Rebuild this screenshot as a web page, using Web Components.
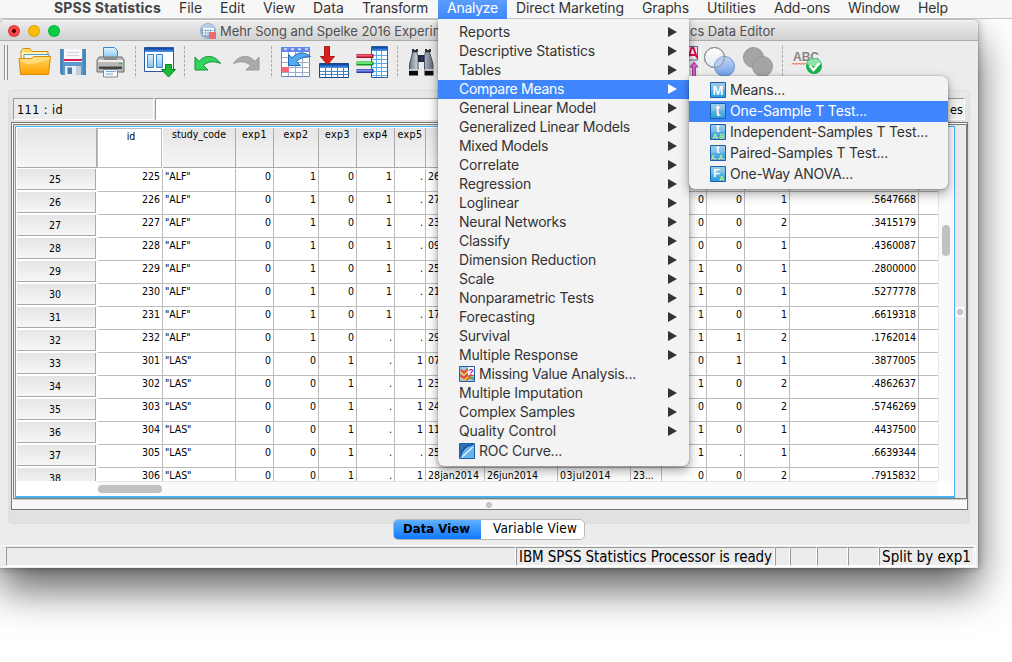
<!DOCTYPE html>
<html lang="en"><head><meta charset="utf-8"><title>SPSS Statistics</title>
<style>
html,body{margin:0;width:1012px;height:662px;overflow:hidden;background:#fff}
body{font-family:Inter,"Open Sans",sans-serif;color:#333}
</style></head><body>
<stats-desktop></stats-desktop>
<script>
const LUCIDA='"DejaVu Sans Condensed","DejaVu Sans",sans-serif';
const define=(name,build,hook)=>customElements.define(name,class extends HTMLElement{
  connectedCallback(){
    if(this.shadowRoot)return;
    this.attachShadow({mode:'open'}).innerHTML=build(this);
    if(hook)hook(this);
  }
});

/* A single line of text whose tracking is adjusted so that it spans w pixels. */
define('fit-text',()=>`<style>:host{display:inline-block;white-space:pre;flex:none}span{display:inline-block}</style><span><slot></slot></span>`,el=>{
  const w=+el.getAttribute('w');if(!w)return;
  const s=el.shadowRoot.querySelector('span'),n=el.textContent.length;
  s.style.letterSpacing='0px';
  s.style.letterSpacing=((w-s.getBoundingClientRect().width)/n)+'px';
});

define('menu-bar',()=>{
  const items=[['SPSS Statistics',54,107],['File',179,23],['Edit',220,25],['View',263,32],['Data',313,31],['Transform',362,66],['Analyze',447,51],['Direct Marketing',516,108],['Graphs',642,47],['Utilities',707,49],['Add-ons',774,56],['Window',848,52],['Help',918,30]];
  let end=0;
  const html=items.map(([t,x,w],i)=>{
    const on=t==='Analyze',a=on?438:x,b=on?507:x+w;
    const h=`<div class="i ${on?'on':''} ${i?'':'b'}" style="margin-left:${a-end}px;width:${b-a}px"><fit-text w="${w}">${t}</fit-text></div>`;
    end=b;return h;
  }).join('');
  return `<style>:host{display:flex;height:19px;background:#f7f7f7;border-bottom:1px solid #c4c4c4;box-sizing:border-box;font-size:14px;line-height:15px;color:#333;position:relative;z-index:3}
  .i{flex:none;height:19px;box-sizing:border-box}.b{font-weight:700;color:#444}.on{background:linear-gradient(#5b9dfb,#3f87fb);color:#fff;padding-left:9px}</style>${html}`;
});

define('title-bar',()=>`<style>
:host{display:flex;height:21px;box-sizing:border-box;border-bottom:1px solid #acacac;border-top:1px solid #f6f6f6;background:linear-gradient(#ececec,#d1d1d1);border-radius:5px 5px 0 0;font-size:13px;line-height:20px;color:#505050;overflow:hidden}
.d{width:12px;height:12px;box-sizing:border-box;border-radius:50%;margin:4px 0 0 8px;flex:none;border:1px solid #0002}
svg{margin:2px 3px 0 140px;flex:none}.clip{width:218px;overflow:hidden;flex:none}.r{margin-left:252px}</style>
<div class="d" style="background:radial-gradient(circle,#500 0 1.7px,#fc4648 2.3px)"></div><div class="d" style="background:#fdbc05"></div><div class="d" style="background:#08cf42"></div>
<svg width="17" height="17" viewBox="0 0 17 17"><circle cx="8" cy="8" r="8" fill="#8faed0"/><path d="M1 5a8 8 0 0 1 14 0z" fill="#b7cbe1"/><path d="M3 5h11v7H3z" fill="#fff"/><path d="M3 7.5h11M3 10h11M5.5 6v6M8 6v6M10.500 6v6" stroke="#86a7d0" stroke-width=".8"/><path d="M9 9h7v7H9z" fill="#ef6a6e"/></svg>
<div class="clip"><fit-text w="224">Mehr Song and Spelke 2016 Experim</fit-text></div><fit-text class="r" w="85">cs Data Editor</fit-text>`);

define('tool-bar',()=>{
  const sep=x=>[x,1,`<path d="M${x+.5} 46v32" stroke="#aaa" stroke-dasharray="3 1.500"/>`];
  const items=[
  [3,6,`<path d="M4.500 45v35M7.500 45v35" stroke="#8d8d8d"/><path d="M5.500 45v35" stroke="#fff"/>`],
  [18,34,`<path d="M21 74V51l2-2.500h7l2 3h16v18z" fill="#fff3b5" stroke="#d98709"/><path d="M22 52l2-2.500h6l2 3" fill="#ffd34a"/><path d="M24 54.500h25v14H24z" fill="#f2fbff" stroke="#4c9fd6"/><path d="M20.500 74.500L19 58.500h12l3-2h16.500L48.500 74.500z" fill="url(#fo)" stroke="#e08a07"/><path d="M20 60c9 9 20 1 30-1v-2H34l-3 2H20z" fill="#ffe48a" opacity=".7"/>`],
  [60,27,`<path d="M60 49h26v26H62l-2-2z" fill="#5b9acb"/><path d="M60 49h3v26h-1l-2-2zM83 49h3v26h-3z" fill="#4a88ba"/><path d="M64 49h18v13H64z" fill="#f7f7fa"/><path d="M64 60h18" stroke="#d91f55" stroke-width="2"/><path d="M67 52.500h12M67 55.500h12" stroke="#d5d5de"/><path d="M65 66h16v9H65z" fill="#e9eef3"/><path d="M67.500 67.500h4.500V74h-4.500z" fill="#407fb0"/><path d="M76 66h5v9h-5z" fill="#c2ccd5"/>`],
  [96,29,`<path d="M103.500 47.500h11l3 3V59h-14z" fill="url(#bl)" stroke="#3e87c8"/><path d="M99 57h23l2 3v12h-27V60z" fill="#b9b9b9" stroke="#6d6d6d"/><path d="M98 60h25v2H98z" fill="#eee"/><path d="M104 57h13v3h-13z" fill="#8b8b8b"/><path d="M99 66.500h23v2.500H99z" fill="#444"/><path d="M119 63.500h3" stroke="#26c441" stroke-width="1.500"/><path d="M103.500 69.500h14v7.500h-14z" fill="#f5f8fb" stroke="#888"/><path d="M106 71.500h10M106 74h7" stroke="#7ea6d8"/>`],
  sep(135),
  [143,33,`<path d="M144.500 47.500h29v24h-29z" fill="#fff" stroke="#2a579e"/><path d="M145 48h28v4h-28z" fill="url(#hd)"/><path d="M147.500 54.500h6v13h-6zM156.500 54.500h6v13h-6z" fill="url(#bl)" stroke="#3e82c4"/><path d="M165.500 64.500h6v5h4l-7 7.500-7-7.500h4z" fill="#16bd34" stroke="#08831c"/>`],
  sep(184),
  [194,28,`<path d="M195 57v13h13l-4.500-4.500c4-4 10-5 17-2-5-8-15-10-21.500-2z" fill="#32d45a" stroke="#15923a"/>`],
  [232,28,`<path d="M259 57v13h-13l4.500-4.500c-4-4-10-5-17-2 5-8 15-10 21.500-2z" fill="#aaa" stroke="#999"/>`],
  sep(271),
  [280,32,`<path d="M281.500 47.500h28v29h-28z" fill="#fff" stroke="#6a86c2"/><path d="M281 47h29v5h-29z" fill="#6387ef"/><path d="M283.500 48.500h4l-2 2zM290.500 48.500h4l-2 2zM297.500 48.500h4l-2 2zM304.500 48.500h4l-2 2z" fill="#fff"/><path d="M288.500 52v24M295.500 52v24M302.500 52v24M282 57.500h28M282 62.500h28M282 67.500h28M282 72.500h28" stroke="#9badc7"/><path d="M282 67h7v5h-7z" fill="#fa6476"/><path d="M288.500 54.500v11h12l-4-4c4-4 9-5 14-5-6-5-14-5-18 1.500z" fill="#54aaf2" stroke="#1e66b4"/>`],
  [319,32,`<path d="M319.500 63.500h29v14h-29z" fill="#fff" stroke="#164887"/><path d="M320 64h28v4h-28z" fill="url(#hd)"/><path d="M325.500 68v9M331.500 68v9M337.500 68v9M343.500 68v9M320 71.500h29M320 74.500h29" stroke="#3c83bf"/><path d="M324.500 46.500h5v10h5l-7 8-7-8h4z" fill="#e01c1c" stroke="#921"/>`],
  [355,34,`<path d="M371.500 46.500h16v31h-16z" fill="#fff" stroke="#285e9c"/><path d="M372 47h15v4h-15z" fill="url(#hd)"/><path d="M376.500 51v26M381.500 51v26M372 55.500h15M372 59.500h15M372 63.500h15M372 67.500h15M372 71.500h15M372 75.500h15" stroke="#55aeea"/><path d="M356.500 56h17" stroke="#a91228" stroke-width="4"/><path d="M357 55.500h15" stroke="#ff5a74" stroke-width="2"/><path d="M356.500 63.500h17" stroke="#159724" stroke-width="4"/><path d="M357 63h15" stroke="#5fe86c" stroke-width="2"/><path d="M356.500 71h17" stroke="#2a3aa9" stroke-width="4"/><path d="M357 70.500h15" stroke="#7b8df5" stroke-width="2"/>`],
  sep(397),
  [408,27,`<path d="M412.500 52h4l1.500 4v14h-8.500v-6l2-7zM425.500 52h4l1.500 5 2 7v6h-8.500V56z" fill="url(#bi)" stroke="#4a5460"/><path d="M412 49h6v3h-6zM425 49h6v3h-6z" fill="#2d323b"/><path d="M414 49.500h2M427 49.500h2" stroke="#dde"/><path d="M418 55h6v7h-6z" fill="#272b33"/><path d="M409 70h9v5.500h-9zM424.500 70h9v5.500h-9z" fill="#0b0b0d"/><path d="M409 70h9M424.500 70h9" stroke="#e8edf3" stroke-width="1.500"/><path d="M421 57h2v3h-2z" fill="#3a2eb0"/>`],
  [682,19,`<path d="M683 46.500h14.500V60H683z" fill="#fdeef4" stroke="#4a69a2"/><path d="M688 58l3.500-10h2L697 58M689 55h7" stroke="#e00b50" stroke-width="2" fill="none"/><path d="M694 62l-4 5h2.500v10h3V67h2.500z" fill="#d767cb" stroke="#a23c9a"/><path d="M700.500 45v32" stroke="#fff"/>`],
  [703,34,`<circle cx="714.500" cy="57.500" r="10" fill="url(#vw)" stroke="#8f8f8f"/><circle cx="724.500" cy="66.500" r="10" fill="url(#vb)" stroke="#6c8fcc"/><path d="M715 65a10 10 0 0 1 9.500-8.500 10 10 0 0 1-8.500 11z" fill="#b7cbee"/><circle cx="714.500" cy="57.500" r="10" fill="none" stroke="#8f8f8f"/>`],
  [742,33,`<circle cx="753.500" cy="57.500" r="10" fill="#a5a5a5" stroke="#959595"/><circle cx="762.500" cy="66.500" r="10" fill="#a5a5a5" stroke="#959595"/>`],
  sep(782),
  [791,33,`<text x="793" y="61" font-family="Liberation Sans" font-size="12" font-weight="700" fill="#858585" textLength="26" lengthAdjust="spacingAndGlyphs">ABC</text><path d="M792 64.500l1.500-1.500 1.500 1.500 1.500-1.500 1.500 1.500 1.500-1.500 1.500 1.500 1.500-1.500 1.500 1.500 1.500-1.500" stroke="#f0501e" fill="none"/><circle cx="814" cy="66" r="8" fill="#18b14c"/><path d="M807 64a7.200 7.200 0 0 1 14 0c-4 3-9 3-14 0z" fill="#8ee2a6"/><path d="M809.500 65.500l4 4.500 6-7" stroke="#fff" stroke-width="2.500" fill="none"/>`]];
  let end=0;
  const html=items.map(([x,w,s])=>{const m=x-end;end=x+w;return `<svg style="margin-left:${m}px" width="${w}" height="36" viewBox="${x} 44 ${w} 36">${s.includes('url(')?defs:''}${s}</svg>`}).join('');
  return `<style>:host{display:flex;height:49px;padding-top:3px;box-sizing:border-box}svg{flex:none}</style>${html}`;
});
const g=(id,a,b)=>`<linearGradient id="${id}" x2="0" y2="1"><stop stop-color="${a}"/><stop offset="1" stop-color="${b}"/></linearGradient>`;
const defs=`<defs>${g('fo','#ffd765','#ffa000')}${g('bl','#def4ff','#7cc5f5')}${g('hd','#083f9e','#4f9dec')}${g('vw','#ffffff','#e2e7f0')}${g('vb','#c6d8f7','#6f9ce4')}<linearGradient id="bi"><stop stop-color="#6b7a89"/><stop offset=".4" stop-color="#dde6ee"/><stop offset="1" stop-color="#5e6b78"/></linearGradient></defs>`;

const EDGES=[97,162,235,273,318,356,394,425,484,557,630,661,706,744,789,918,938];
const COLS=EDGES.slice(1).map((e,i)=>(e-EDGES[i])+'px').join(' ');
const L='0 1 0 1 .',S='0 0 1 . 1';
const ROWS=[
[25,225,'ALF',L,'26',''],[26,226,'ALF',L,'27','0 0 1 .5647668'],[27,227,'ALF',L,'23','0 0 2 .3415179'],[28,228,'ALF',L,'09','0 0 1 .4360087'],
[29,229,'ALF',L,'25','1 0 1 .2800000'],[30,230,'ALF',L,'21','1 0 1 .5277778'],[31,231,'ALF',L,'17','1 0 1 .6619318'],[32,232,'ALF','0 1 0 . .','29','1 1 2 .1762014'],
[33,301,'LAS',S,'07','0 1 1 .3877005'],[34,302,'LAS',S,'23','1 0 2 .4862637'],[35,303,'LAS',S,'24','0 0 2 .5746269'],[36,304,'LAS',S,'11','1 0 1 .4437500'],
[37,305,'LAS','0 0 1 . .','25','1 . 1 .6639344'],[38,306,'LAS',S,'28jan2014|26jun2014|03jul2014|23...','0 0 2 .7915832']];

define('data-row',el=>{
  const [n,id,code,a,dates,b]=ROWS[el.getAttribute('index')];
  const d=dates.split('|'),r=b?b.split(' '):['','','',''];
  const cell=(t,l)=>`<div class="c ${l?'l':''}">${t}</div>`;
  return `<style>:host{display:grid;grid-template-columns:81px ${COLS};height:23px;box-sizing:border-box}
  .h{height:21px;box-sizing:border-box;width:79px;border-right:1px solid #aaa;border-bottom:1px solid #aaa;background:linear-gradient(#e5e5e5,#f6f6f6);text-align:center;line-height:21px;padding-right:2px}
  .c{border-right:1px solid #bcbcbc;border-bottom:1px solid #bcbcbc;box-sizing:border-box;height:23px;line-height:15px;text-align:right;padding-right:2px;white-space:nowrap;overflow:hidden}
  .c.l{text-align:left;padding:0 0 0 2px}.c:last-child{border-right:0}</style>
  <div class="h">${n}</div>${cell(id)}${cell('"'+code+'"',1)}${a.split(' ').map(t=>cell(t)).join('')}${[0,1,2,3].map(i=>cell(/^\d.*\d{4}$/.test(d[i]||'')?`<fit-text w="51">${d[i]}</fit-text>`:d[i]||'',1)).join('')}${r.map(t=>cell(t)).join('')}<div class="c"></div>`;
});

define('data-grid',()=>{
  const names=['id','study_code','exp1','exp2','exp3','exp4','exp5'],widths=[0,54,25,25,25,25,25];
  return `<style>:host{display:block;height:372px;box-sizing:border-box;border:1px solid #47b2ee;border-width:1px 1px 2px 1px;background:#fff;font:10.5px/17px ${LUCIDA};font-stretch:condensed;letter-spacing:-.05px;color:#000;width:940px;padding-left:1px}
  .main{display:flex;height:354px}.table{width:921px;height:354px;overflow:hidden;flex:none}
  .head{display:grid;grid-template-columns:81px ${COLS};height:41px;margin-top:1px}
  .head div{background:linear-gradient(#e5e5e5,#f6f6f6);border-right:1px solid #aaa;border-bottom:1px solid #aaa;height:40px;box-sizing:border-box;text-align:center;line-height:13px}
  .head .k{margin-right:1px}.head div.id{background:#fff;border:1px solid #bbb;margin:0 1px 0 -1px;line-height:15px;padding-left:3px}
  .v{width:16px;background:#fafafa;border-left:1px solid #e6e6e6;box-sizing:border-box;padding:98px 0 0 3px}.v i{display:block;width:8px;height:31px;border-radius:4px;background:#c1c1c1}
  .s{height:15px;display:flex;border-top:1px solid #e4e4e4;margin-left:80px;width:841px;background:#fafafa;box-sizing:border-box;padding:3px 1px}.s i{width:64px;height:8px;border-radius:4px;background:#c1c1c1}</style>
  <div class="main"><div class="table"><div class="head"><div class="k"></div>${EDGES.slice(1).map((e,i)=>`<div class="${i?'':'id'}">${names[i]?`<fit-text w="${widths[i]}">${names[i]}</fit-text>`:''}</div>`).join('')}</div>
  ${ROWS.map((r,i)=>`<data-row index="${i}"></data-row>`).join('')}</div><div class="v"><i></i></div></div><div class="s"><i></i></div>`;
});

define('data-panel',()=>`<style>
:host{display:block;margin-left:8px;width:962px;height:434px;box-sizing:border-box;background:linear-gradient(#e8e8e8,#e1e1e1 30px);border:1px solid #dedede;border-radius:4px;padding:7px 0 0 2px}
.fields{display:flex;margin-left:2px;width:952px;height:24px;font:12.5px/22px ${LUCIDA};font-stretch:condensed;color:#000}
.f{box-sizing:border-box;height:22px;border:1px solid #fff;border-top-color:#999;border-left-color:#999;background:#ececec}
.a{width:141px;padding-left:3px;flex:none}.b{flex:1;background:#fff;margin-left:1px}.c{flex:none;width:109px;margin-left:1px;text-align:right;padding-right:1px;background:#f1f1f1}
.outer{width:957px;height:388px;box-sizing:border-box;border:1px solid #777;background:linear-gradient(#fff,#f8f8f8);padding:1px}
.inner{width:954px;height:375px;box-sizing:border-box;border:1px solid #7c7c7c;display:flex;padding:1px;background:#ebebeb}
.split{flex:1;display:flex;align-items:center}.vd{width:9px;height:10px;background:#fafafa;display:grid;place-items:center}.dot{width:6px;height:6px;border-radius:50%;background:#ccc;box-sizing:border-box;border:1px solid #b8b8b8}
.hd{height:10px;display:flex;justify-content:center;align-items:center;border-top:1px solid #ccc;padding-right:1px;box-sizing:border-box}</style>
<div class="fields"><div class="f a"><fit-text w="46">111 : id</fit-text></div><div class="f b"></div><div class="f c"><fit-text w="13">es</fit-text></div></div>
<div class="outer"><div class="inner"><data-grid></data-grid><div class="split"><div class="vd"><div class="dot"></div></div></div></div><div class="hd"><div class="dot"></div></div></div>`);

define('view-tabs',()=>`<style>:host{display:flex;margin:-5px 0 0 393px;height:21px;width:192px;box-sizing:border-box;border:1px solid #b9b9b9;border-radius:5px;background:#fff;overflow:hidden;font:13.5px/17px ${LUCIDA};font-stretch:condensed;color:#000;position:relative}
.on{margin:-1px 0 -1px -1px;width:88px;height:21px;line-height:19px;font-size:13px;font-weight:700;background:linear-gradient(#63b2fd,#0a76fe);box-sizing:border-box;padding-left:10px}.off{padding-left:12px}</style>
<div class="on"><fit-text w="67">Data View</fit-text></div><div class="off"><fit-text w="84">Variable View</fit-text></div>`);

define('status-bar',()=>`<style>:host{display:flex;margin:5px 2px 0 1px;height:22px;border-top:1px solid #fff;border-bottom:1px solid #fff;border-right:1px solid #fff;box-sizing:border-box;padding:1px 1px 0 5px;font:15px/20px ${LUCIDA};font-stretch:condensed;color:#000}
div{box-sizing:border-box;height:19px;border:1px solid #fff;border-top-color:#999;border-left-color:#999;padding-left:2px;overflow:hidden;line-height:18px;flex:none}</style>
<div style="width:510px"></div><div style="width:259px"><fit-text w="253">IBM SPSS Statistics Processor is ready</fit-text></div><div style="width:15px"></div><div style="width:27px"></div><div style="width:31px"></div><div style="width:31px"></div><div style="width:95px"><fit-text w="89">Split by exp1</fit-text></div>`);

define('menu-icon',el=>{
  const t={
  M:`<text x="8" y="13" text-anchor="middle" font-size="13" font-weight="700" fill="#fff">M</text>`,
  t:`<text x="8" y="13" text-anchor="middle" font-size="16" font-weight="700" fill="#fff" stroke="#367" stroke-width=".2">t</text>`,
  ab:`<text x="8" y="8" text-anchor="middle" font-size="10" font-weight="700" fill="#fff">t</text><text x="2.500" y="15" font-size="7.500" fill="#ffff62" textLength="12" lengthAdjust="spacingAndGlyphs">A-B</text>`,
  pair:`<text x="8" y="8" text-anchor="middle" font-size="10" font-weight="700" fill="#fff">t</text><text x="1" y="14.500" font-size="7.500" fill="#ffff62" textLength="14" lengthAdjust="spacingAndGlyphs">A₁-A₂</text>`,
  F:`<text x="6.500" y="10.500" text-anchor="middle" font-size="11" font-weight="700" fill="#fff">F</text><text x="11.500" y="15" text-anchor="middle" font-size="7" fill="#ffff62">A</text>`,
  roc:`<path d="M1 15C2 8 7 2 15 1v14z" fill="#66b4e8"/><path d="M1 1h13C6 2 2 7 1 14z" fill="#2f6fb8"/><path d="M1.500 14C2.500 7 7 2.500 14 1.500" fill="none" stroke="#134a98" stroke-width="1.300"/><path d="M3 14L14 4" fill="none" stroke="#eefaff" stroke-width="1.200"/>`,
  miss:`<path d="M1 1h14v14H1z" fill="#a5c6df"/><path d="M2 4l3 3 4-4M1 9l4 3 4-4M7 14l3-3 5 2M10 9h5" stroke="#e84520" stroke-width="2" fill="none"/><path d="M2 6l3 3 4-4M2 13l4 1 3-3" stroke="#f4bd3d" stroke-width="1.500" fill="none"/><path d="M9 1h6v8H9z" fill="#fff5ff"/><text x="12" y="8.500" text-anchor="middle" font-size="9" font-weight="700" fill="#a5259b">?</text><path d="M10 11h5v2h-5z" fill="#4fb33b"/>`};
  return `<style>:host{display:block;width:16px;height:16px;flex:none}svg{display:block}</style><svg width="16" height="16" font-family="Liberation Sans"><defs>${g('m','#8fc6e6','#259fdc')}</defs><path d="M.5.5h15v15H.5z" fill="url(#m)"/><path d="M1 1h14v6L1 8z" fill="#b5d7eb" opacity=".35"/>${t[el.getAttribute('kind')]}<path d="M.5.5h15v15H.5z" fill="none" stroke="#1b60ad"/></svg>`;
});

define('menu-item',el=>{
  const k=el.getAttribute('icon');
  return `<style>:host{display:flex;align-items:center;height:var(--row,19px);padding:0 0 1px 21px;box-sizing:border-box;font-size:14px;line-height:18px;color:#333}
  :host([on]){background:#3f86fd;color:#fff}menu-icon{margin-right:4px}.a{margin-left:auto;margin-right:12px;width:0;height:0;border:5px solid transparent;border-left:9px solid;border-right:0}</style>
  ${k?`<menu-icon kind="${k}"></menu-icon>`:''}<fit-text w="${el.getAttribute('w')}">${el.getAttribute('label')}</fit-text>${el.hasAttribute('sub')?'<div class="a"></div>':''}`;
});

define('pop-menu',()=>`<style>:host{display:block;position:absolute;box-sizing:border-box;background:#f3f3f3;box-shadow:0 0 1px #0007,0 5px 12px #0005,0 1px 4px #0003}</style><slot></slot>`);

define('stats-window',()=>`<style>:host{display:block;width:978px;height:548px;margin-top:1px;box-sizing:border-box;background:#ececec;border-radius:5px 5px 0 0;box-shadow:0 0 1px #000a,0 0 9px #0005,0 21px 42px rgba(0,0,0,.62)}</style>
<title-bar></title-bar><tool-bar></tool-bar><data-panel></data-panel><view-tabs></view-tabs><status-bar></status-bar>`);

define('stats-desktop',()=>{
  const it=[['Reports',51],['Descriptive Statistics',136],['Tables',42],['Compare Means',105],['General Linear Model',137],['Generalized Linear Models',171],['Mixed Models',89],['Correlate',60],['Regression',72],['Loglinear',60],['Neural Networks',107],['Classify',51],['Dimension Reduction',137],['Scale',35],['Nonparametric Tests',135],['Forecasting',76],['Survival',51],['Multiple Response',119],['Missing Value Analysis...',157,'miss'],['Multiple Imputation',124],['Complex Samples',116],['Quality Control',97],['ROC Curve...',83,'roc']];
  const sub=[['Means...',55,'M'],['One-Sample T Test...',137,'t'],['Independent-Samples T Test...',198,'ab'],['Paired-Samples T Test...',158,'pair'],['One-Way ANOVA...',123,'F']];
  const mk=([l,w,i],on,s)=>`<menu-item label="${l}" w="${w}" ${i?`icon="${i}"`:''} ${on?'on':''} ${s?'sub':''}></menu-item>`;
  return `<style>:host{display:block;position:relative;width:1012px;height:662px;overflow:hidden;background:#fff}
  .m{left:438px;top:19px;width:251px;height:447px;padding-top:4px;border-radius:0 0 6px 6px;z-index:1}.m menu-item:last-child{--row:21px}
  .s{left:689px;top:76px;width:259px;height:113px;padding-top:4px;border-radius:0 6px 6px 6px;--row:21px;z-index:2}</style>
  <menu-bar></menu-bar><stats-window></stats-window>
  <pop-menu class="m">${it.map((x,i)=>mk(x,i===3,!x[2])).join('')}</pop-menu>
  <pop-menu class="s">${sub.map((x,i)=>mk(x,i===1)).join('')}</pop-menu>`;
});
</script></body></html>
